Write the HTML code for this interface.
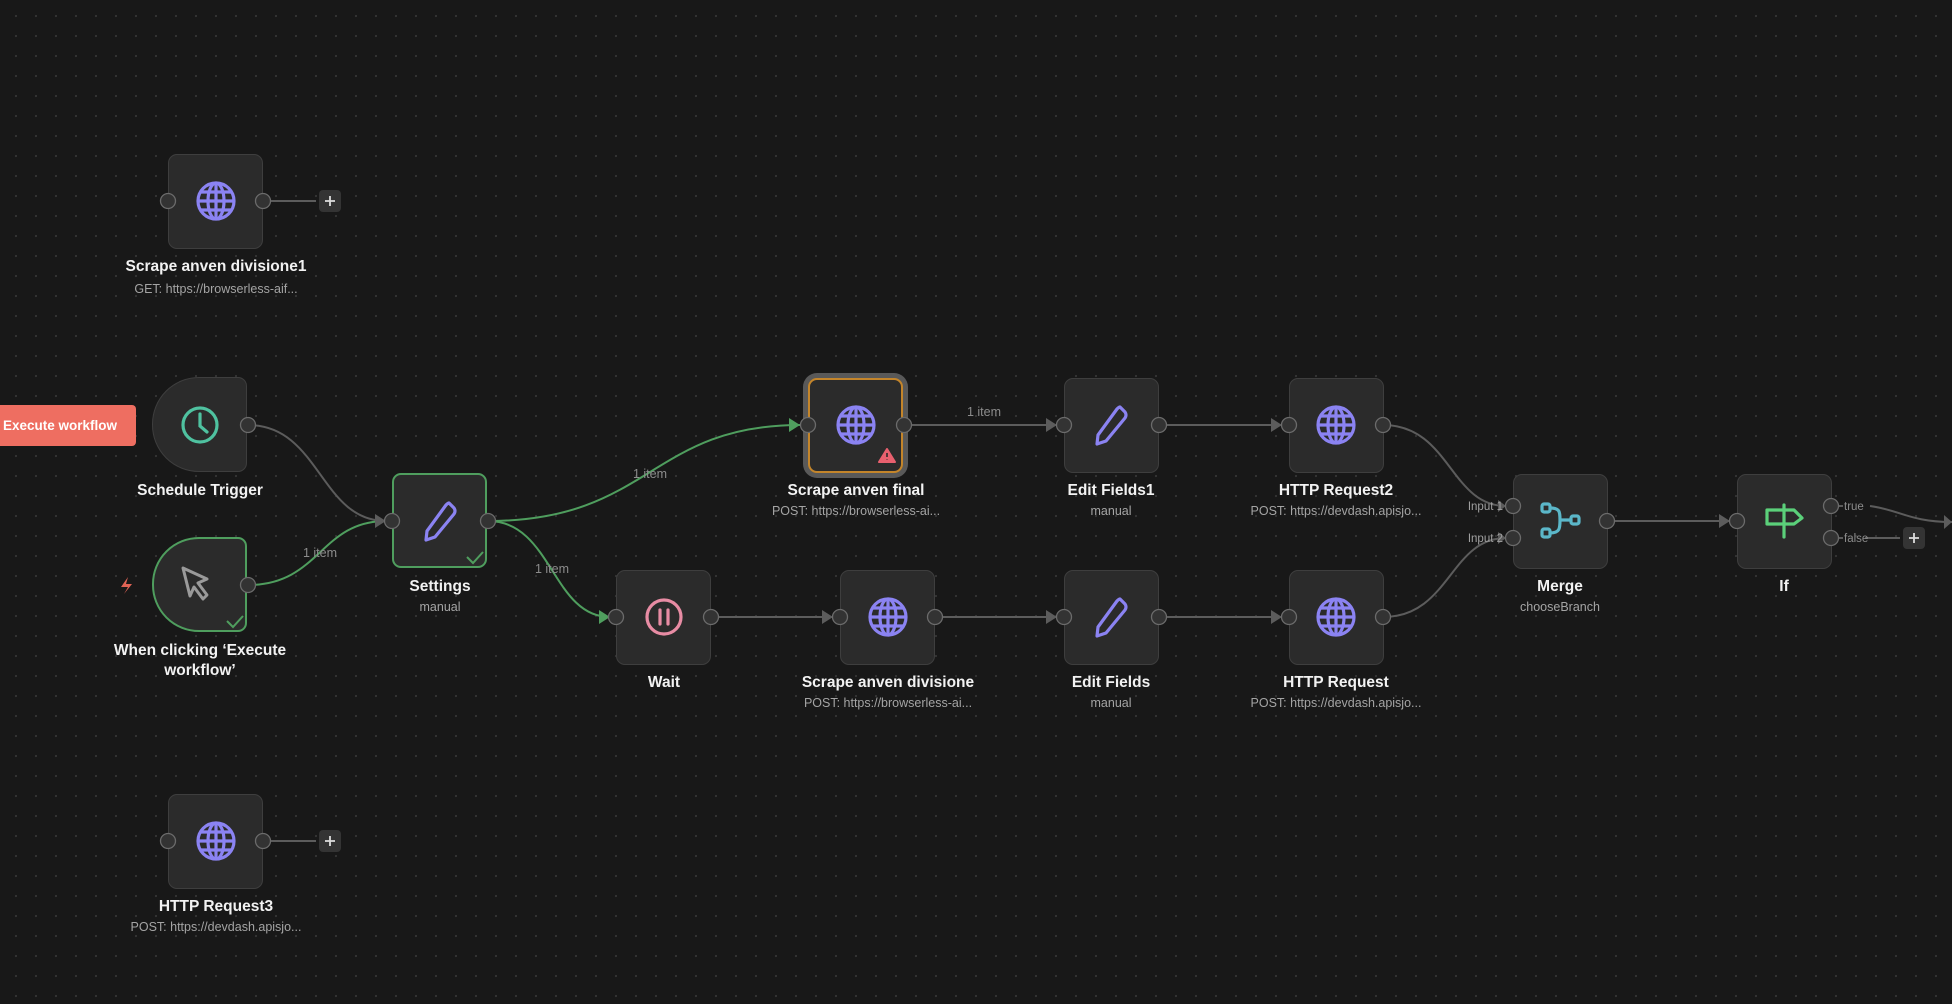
<!DOCTYPE html>
<html><head><meta charset="utf-8">
<style>
html,body{margin:0;padding:0;}
body{width:1952px;height:1004px;overflow:hidden;background:#181818;
background-image:radial-gradient(circle,#343434 1px,transparent 1.3px);background-size:20px 20px;background-position:6px 6px;
font-family:"Liberation Sans",sans-serif;position:relative;}
.n{position:absolute;width:93px;height:93px;background:#2b2b2b;border:1px solid #3e3e3e;border-radius:9px;box-sizing:content-box;}
.trig{border-radius:47px 9px 9px 47px;}
.ok{border:2px solid #4f9e5e;width:91px;height:91px;}
.t{position:absolute;width:260px;text-align:center;color:#f2f2f2;font-size:15.5px;font-weight:bold;}
.s{position:absolute;width:260px;text-align:center;color:#a4a4a4;font-size:12.5px;}
.btn{position:absolute;left:0;top:405px;width:136px;height:41px;background:#ee6e61;border-radius:0 4px 4px 0;color:#fff;font-size:13.5px;font-weight:bold;line-height:41px;text-align:right;box-sizing:border-box;padding-right:19px;}
svg{position:absolute;left:0;top:0;}
</style></head><body>
<div class="btn">Execute workflow</div>

<div class="n" style="left:168px;top:154px"></div>
<div class="n trig" style="left:152px;top:377px"></div>
<div class="n trig ok" style="left:152px;top:537px"></div>
<div class="n ok" style="left:392px;top:473px"></div>
<div class="n" style="left:808px;top:378px;border:2px solid #c4852a;width:91px;height:91px;box-shadow:0 0 0 5px #595959;"></div>
<div class="n" style="left:1064px;top:378px"></div>
<div class="n" style="left:1289px;top:378px"></div>
<div class="n" style="left:1513px;top:474px"></div>
<div class="n" style="left:1737px;top:474px"></div>
<div class="n" style="left:616px;top:570px"></div>
<div class="n" style="left:840px;top:570px"></div>
<div class="n" style="left:1064px;top:570px"></div>
<div class="n" style="left:1289px;top:570px"></div>
<div class="n" style="left:168px;top:794px"></div>

<svg width="1952" height="1004" viewBox="0 0 1952 1004">
<defs>
<g id="globe" fill="none" stroke="#8b83f2" stroke-width="3.2">
<circle cx="0" cy="0" r="18"/><ellipse cx="0" cy="0" rx="8" ry="18"/>
<line x1="-18" y1="0" x2="18" y2="0"/><line x1="0" y1="-18" x2="0" y2="18"/>
<path d="M-15 -9H15M-15 9H15"/>
</g>
<g id="pen" fill="none" stroke="#8b83f2" stroke-width="3.2" stroke-linejoin="round">
<path d="M9 -18 L14 -13 Q16 -10 14 -7 L-5 16 L-14 19 L-13 10 L6 -16 Q8 -18 9 -18Z"/>
</g>
<g id="hd"><circle r="7.5" fill="#333" stroke="#6b6b6b" stroke-width="1.3"/></g>
<g id="plus"><rect x="-11" y="-11" width="22" height="22" rx="4" fill="#343434"/><path d="M-5 0H5M0 -5V5" stroke="#ddd" stroke-width="1.8"/></g>
</defs>
<g fill="none" stroke-width="2">
<path d="M248 425 C320 425 320 521 386 521" stroke="#5c5c5c"/>
<path d="M248 585 C320 585 320 521 386 521" stroke="#4f9e5e"/>
<path d="M488 521 C650 521 650 425 800 425" stroke="#4f9e5e"/>
<path d="M488 521 C552 521 552 617 610 617" stroke="#4f9e5e"/>
<path d="M904 425 H1057" stroke="#5c5c5c"/>
<path d="M1159 425 H1282" stroke="#5c5c5c"/>
<path d="M1383 425 C1450 425 1450 506 1506 506" stroke="#5c5c5c"/>
<path d="M712 617 H833" stroke="#5c5c5c"/>
<path d="M935 617 H1057" stroke="#5c5c5c"/>
<path d="M1159 617 H1282" stroke="#5c5c5c"/>
<path d="M1383 617 C1450 617 1450 538 1506 538" stroke="#5c5c5c"/>
<path d="M1607 521 H1730" stroke="#5c5c5c"/>
<path d="M1870 506 C1900 510 1910 522 1952 522" stroke="#5c5c5c"/>
<path d="M1865 538 H1900" stroke="#5c5c5c"/>
<path d="M263 201 H316" stroke="#5c5c5c"/>
<path d="M263 841 H316" stroke="#5c5c5c"/>
</g>
<g>
<path d="M375 514 L386 521 L375 528Z" fill="#5c5c5c"/>
<path d="M789 418 L800 425 L789 432Z" fill="#4f9e5e"/>
<path d="M599 610 L610 617 L599 624Z" fill="#4f9e5e"/>
<path d="M1046 418 L1057 425 L1046 432Z" fill="#5c5c5c"/>
<path d="M1271 418 L1282 425 L1271 432Z" fill="#5c5c5c"/>
<path d="M1498 500 L1506 506 L1498 512Z" fill="#5c5c5c"/>
<path d="M1498 532 L1506 538 L1498 544Z" fill="#5c5c5c"/>
<path d="M822 610 L833 617 L822 624Z" fill="#5c5c5c"/>
<path d="M1046 610 L1057 617 L1046 624Z" fill="#5c5c5c"/>
<path d="M1271 610 L1282 617 L1271 624Z" fill="#5c5c5c"/>
<path d="M1719 514 L1730 521 L1719 528Z" fill="#5c5c5c"/>
<path d="M1944 515 L1952 522 L1944 529Z" fill="#5c5c5c"/>
</g>
<g font-family="Liberation Sans, sans-serif" font-size="12.5" fill="#8c8c8c">
<text x="320" y="557" text-anchor="middle">1 item</text>
<text x="650" y="478" text-anchor="middle">1 item</text>
<text x="552" y="573" text-anchor="middle">1 item</text>
<text x="984" y="416" text-anchor="middle">1 item</text>
<text x="1503" y="510" text-anchor="end" font-size="11.5" fill="#a0a0a0">Input 1</text>
<text x="1503" y="542" text-anchor="end" font-size="11.5" fill="#a0a0a0">Input 2</text>
<text x="1844" y="510" font-size="11.5">true</text>
<text x="1844" y="542" font-size="11.5">false</text>
</g>
<path d="M1839 506H1843M1839 538H1843" stroke="#5c5c5c" stroke-width="2"/>
<use href="#plus" x="330" y="201"/>
<use href="#plus" x="330" y="841"/>
<use href="#plus" x="1914" y="538"/>

<use href="#hd" x="168" y="201"/><use href="#hd" x="263" y="201"/>
<use href="#hd" x="248" y="425"/><use href="#hd" x="248" y="585"/>
<use href="#hd" x="392" y="521"/><use href="#hd" x="488" y="521"/>
<use href="#hd" x="808" y="425"/><use href="#hd" x="904" y="425"/>
<use href="#hd" x="1064" y="425"/><use href="#hd" x="1159" y="425"/>
<use href="#hd" x="1289" y="425"/><use href="#hd" x="1383" y="425"/>
<use href="#hd" x="1513" y="506"/><use href="#hd" x="1513" y="538"/><use href="#hd" x="1607" y="521"/>
<use href="#hd" x="1737" y="521"/><use href="#hd" x="1831" y="506"/><use href="#hd" x="1831" y="538"/>
<use href="#hd" x="616" y="617"/><use href="#hd" x="711" y="617"/>
<use href="#hd" x="840" y="617"/><use href="#hd" x="935" y="617"/>
<use href="#hd" x="1064" y="617"/><use href="#hd" x="1159" y="617"/>
<use href="#hd" x="1289" y="617"/><use href="#hd" x="1383" y="617"/>
<use href="#hd" x="168" y="841"/><use href="#hd" x="263" y="841"/>

<use href="#globe" x="216" y="201"/>
<use href="#globe" x="856" y="425"/>
<use href="#globe" x="1336" y="425"/>
<use href="#globe" x="888" y="617"/>
<use href="#globe" x="1336" y="617"/>
<use href="#globe" x="216" y="841"/>
<use href="#pen" x="440" y="521"/>
<use href="#pen" x="1111" y="425"/>
<use href="#pen" x="1111" y="617"/>
<g fill="none" stroke="#4fc2a0" stroke-width="3.2" stroke-linecap="round"><circle cx="200" cy="425" r="17"/><path d="M200 414V426L207 432"/></g>
<path d="M183 568 L190 596 L194 587 L203 599 L207 595 L198 583 L207 579Z" fill="none" stroke="#9a9a9a" stroke-width="3" stroke-linejoin="round"/>
<g fill="none" stroke="#e88ca4" stroke-width="3.2"><circle cx="664" cy="617" r="17"/><path d="M660 610V624M668 610V624" stroke-linecap="round"/></g>
<g fill="none" stroke="#5bb7c9" stroke-width="3.2">
<rect x="1542" y="504" width="8" height="8" rx="2"/><rect x="1542" y="529" width="8" height="8" rx="2"/><rect x="1571" y="516" width="8" height="8" rx="2"/>
<path d="M1550 508 C1560 508 1560 512 1560 520 C1560 528 1560 533 1550 533 M1560 520H1571"/>
</g>
<g fill="none" stroke="#5bd07a" stroke-width="3.2" stroke-linejoin="round" stroke-linecap="round">
<path d="M1767 510 H1794 L1802 518 L1794 524 H1767Z"/><path d="M1784 505V537"/>
</g>
<path d="M887 449 L879 462 H895Z" fill="#e8606e" stroke="#e8606e" stroke-width="2" stroke-linejoin="round"/><path d="M887 453V457M887 459.5V460" stroke="#2b2b2b" stroke-width="1.6"/>
<path d="M227 621 L233 627 L243 616" fill="none" stroke="#4f9e5e" stroke-width="2"/>
<path d="M467 557 L473 563 L483 552" fill="none" stroke="#4f9e5e" stroke-width="2"/>
<path d="M128 577 L121 587 H128 L124 594 L132 584 H126Z" fill="#e06355"/>
</svg>

<div class="t" style="left:86px;top:258px">Scrape anven divisione1</div>
<div class="s" style="left:86px;top:282px">GET: https://browserless-aif...</div>
<div class="t" style="left:70px;top:482px">Schedule Trigger</div>
<div class="t" style="left:70px;top:641px;line-height:20px">When clicking ‘Execute<br>workflow’</div>
<div class="t" style="left:310px;top:578px">Settings</div>
<div class="s" style="left:310px;top:600px">manual</div>
<div class="t" style="left:726px;top:482px">Scrape anven final</div>
<div class="s" style="left:726px;top:504px">POST: https://browserless-ai...</div>
<div class="t" style="left:981px;top:482px">Edit Fields1</div>
<div class="s" style="left:981px;top:504px">manual</div>
<div class="t" style="left:1206px;top:482px">HTTP Request2</div>
<div class="s" style="left:1206px;top:504px">POST: https://devdash.apisjo...</div>
<div class="t" style="left:1430px;top:578px">Merge</div>
<div class="s" style="left:1430px;top:600px">chooseBranch</div>
<div class="t" style="left:1654px;top:578px">If</div>
<div class="t" style="left:1878px;top:578px">HTTP</div>
<div class="s" style="left:1878px;top:600px">POST: https://</div>
<div class="t" style="left:534px;top:674px">Wait</div>
<div class="t" style="left:758px;top:674px">Scrape anven divisione</div>
<div class="s" style="left:758px;top:696px">POST: https://browserless-ai...</div>
<div class="t" style="left:981px;top:674px">Edit Fields</div>
<div class="s" style="left:981px;top:696px">manual</div>
<div class="t" style="left:1206px;top:674px">HTTP Request</div>
<div class="s" style="left:1206px;top:696px">POST: https://devdash.apisjo...</div>
<div class="t" style="left:86px;top:898px">HTTP Request3</div>
<div class="s" style="left:86px;top:920px">POST: https://devdash.apisjo...</div>
</body></html>
